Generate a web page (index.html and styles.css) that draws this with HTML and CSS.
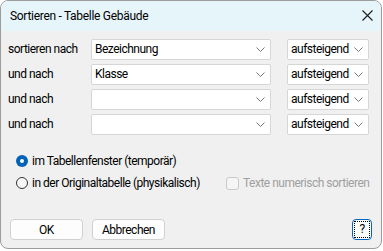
FILE: index.html
```html
<!doctype html>
<html>
<head>
<meta charset="UTF-8">
<title>Sortieren - Tabelle Gebäude</title>
<link rel="stylesheet" href="styles.css">
</head>
<body>
	<div class="dialog">
		<div class="titlebar">
			<span class="title">Sortieren - Tabelle Gebäude</span>
			<svg class="close" width="11" height="11" viewBox="0 0 11 11"><path d="M0.5 0.5L10.5 10.5M10.5 0.5L0.5 10.5" stroke="#1b1b1b" stroke-width="1.1" fill="none"/></svg>
		</div>
		<div class="content">
			<!-- sort keys -->
			<div class="keys">
				<span class="label">sortieren nach</span>
				<div class="combo field"><span>Bezeichnung</span><svg class="chev" width="9" height="5" viewBox="0 0 9 5"><path d="M0.5 0.5L4.5 4.5L8.5 0.5" stroke="#777" fill="none"/></svg></div>
				<div class="combo order"><span>aufsteigend</span><svg class="chev" width="9" height="5" viewBox="0 0 9 5"><path d="M0.5 0.5L4.5 4.5L8.5 0.5" stroke="#777" fill="none"/></svg></div>

				<span class="label">und nach</span>
				<div class="combo field"><span>Klasse</span><svg class="chev" width="9" height="5" viewBox="0 0 9 5"><path d="M0.5 0.5L4.5 4.5L8.5 0.5" stroke="#777" fill="none"/></svg></div>
				<div class="combo order"><span>aufsteigend</span><svg class="chev" width="9" height="5" viewBox="0 0 9 5"><path d="M0.5 0.5L4.5 4.5L8.5 0.5" stroke="#777" fill="none"/></svg></div>

				<span class="label">und nach</span>
				<div class="combo field"><span></span><svg class="chev" width="9" height="5" viewBox="0 0 9 5"><path d="M0.5 0.5L4.5 4.5L8.5 0.5" stroke="#777" fill="none"/></svg></div>
				<div class="combo order"><span>aufsteigend</span><svg class="chev" width="9" height="5" viewBox="0 0 9 5"><path d="M0.5 0.5L4.5 4.5L8.5 0.5" stroke="#777" fill="none"/></svg></div>

				<span class="label">und nach</span>
				<div class="combo field"><span></span><svg class="chev" width="9" height="5" viewBox="0 0 9 5"><path d="M0.5 0.5L4.5 4.5L8.5 0.5" stroke="#777" fill="none"/></svg></div>
				<div class="combo order"><span>aufsteigend</span><svg class="chev" width="9" height="5" viewBox="0 0 9 5"><path d="M0.5 0.5L4.5 4.5L8.5 0.5" stroke="#777" fill="none"/></svg></div>
			</div>
			<!-- options -->
			<div class="options">
				<div class="opt-row">
					<span class="radio checked"></span>
					<span class="opt-text">im Tabellenfenster (temporär)</span>
				</div>
				<div class="opt-row">
					<span class="radio"></span>
					<span class="opt-text">in der Originaltabelle (physikalisch)</span>
					<span class="check"></span>
					<span class="check-text">Texte numerisch sortieren</span>
				</div>
			</div>
			<!-- buttons -->
			<div class="buttons">
				<button class="btn">OK</button>
				<button class="btn">Abbrechen</button>
				<button class="btn help"><span>?</span></button>
			</div>
		</div>
	</div>
</body>
</html>
```

FILE: styles.css
```css
*{margin:0;padding:0;box-sizing:border-box;}
body{background:#fff;font-family:Roboto,"Noto Sans",sans-serif;font-size:12px;letter-spacing:-0.5px;color:#000;}
/*dialog*/
.dialog{width:382px;height:249px;border:1px solid #9c9c9c;border-radius:8px;background:#f0f0f0;overflow:hidden;display:flex;flex-direction:column;}
.titlebar{height:30px;background:#e5f5fa;display:flex;align-items:center;justify-content:space-between;padding:0 8px 0 9px;flex-shrink:0;}
.title{line-height:16px;white-space:nowrap;letter-spacing:-0.3px;}
.close{margin-bottom:2px;}
.content{flex:1;padding:8px 0 0 7px;display:flex;flex-direction:column;}
/*keys*/
.keys{display:grid;grid-template-columns:83px 180px 98px;grid-auto-rows:21px;row-gap:4px;}
.keys .order{margin-left:16px;width:82px;}
.label{line-height:21px;white-space:nowrap;}
.combo{background:#fff;border:1px solid #d6d6d6;border-radius:2px;display:flex;align-items:center;justify-content:space-between;padding:0 5px 0 3px;}
.combo span{line-height:19px;white-space:nowrap;}
.chev{flex-shrink:0;}
/*options*/
.options{margin-top:15px;}
.opt-row{height:22px;display:flex;align-items:center;white-space:nowrap;}
.radio{width:12px;height:12px;border-radius:50%;border:1px solid #333;background:#f7f7f7;margin-left:8px;margin-right:4px;flex-shrink:0;}
.radio.checked{border:none;background:#0063b8;position:relative;}
.radio.checked:after{content:"";position:absolute;left:4px;top:4px;width:4px;height:4px;border-radius:50%;background:#fff;}
.opt-row .opt-text{width:194px;}
.check{width:13px;height:13px;border:1px solid #c9c9c9;border-radius:3px;background:#f5f5f5;margin-right:4px;flex-shrink:0;}
.check-text{color:#a0a0a0;}
/*buttons*/
.buttons{margin-top:25px;display:flex;padding-left:2px;}
.btn{font-family:inherit;font-size:inherit;letter-spacing:inherit;color:#000;width:73px;height:21px;background:#fdfdfd;border:1px solid #d0d0d0;border-radius:4px;margin-right:9px;}
.btn.help{width:20px;margin-left:auto;margin-right:9px;border:1px solid #0067c0;padding:1px;display:flex;}
.btn.help span{flex:1;border:1px dotted #000;line-height:15px;}
```
